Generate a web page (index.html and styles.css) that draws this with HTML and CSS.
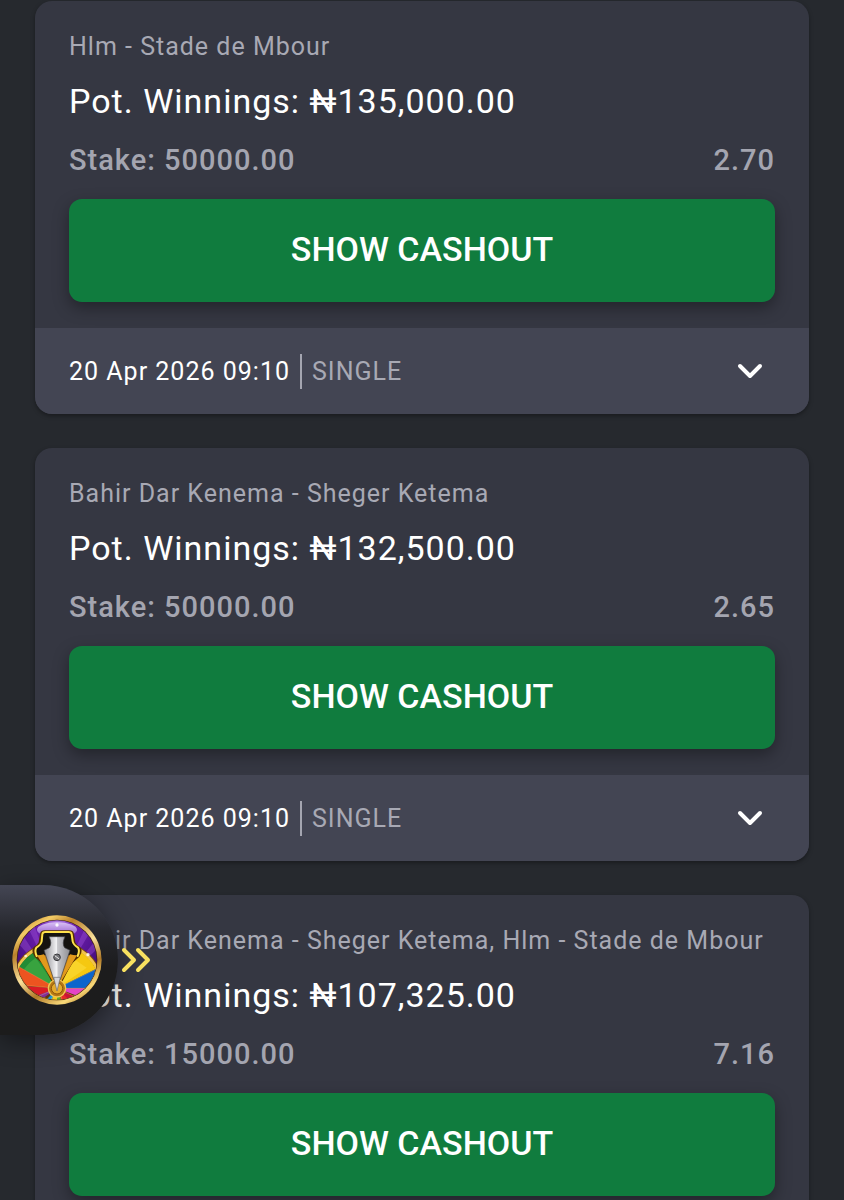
FILE: index.html
```html
<!DOCTYPE html>
<html lang="en">
<head>
<meta charset="utf-8">
<meta name="viewport" content="width=device-width, initial-scale=1">
<title>Open Bets</title>
<link rel="stylesheet" href="styles.css">
</head>

<body>

<main class="bets">
	<article class="bet">
		<div class="bet-main">
			<p class="teams">Hlm - Stade de Mbour</p>
			<p class="winnings">Pot. Winnings: ₦135,000.00</p>
			<p class="stake"><span>Stake: 50000.00</span><span>2.70</span></p>
			<button class="cashout" type="button">SHOW CASHOUT</button>
		</div>
		<div class="bet-footer">
			<span class="date">20 Apr 2026 09:10</span>
			<span class="type">SINGLE</span>
			<button class="toggle" type="button" aria-label="Show details">
				<svg width="26" height="16" viewBox="0 0 26 16"><path d="M3 3l10 10L23 3" fill="none" stroke="#fff" stroke-width="4" stroke-linecap="round" stroke-linejoin="round"/></svg>
			</button>
		</div>
	</article>

	<article class="bet">
		<div class="bet-main">
			<p class="teams">Bahir Dar Kenema - Sheger Ketema</p>
			<p class="winnings">Pot. Winnings: ₦132,500.00</p>
			<p class="stake"><span>Stake: 50000.00</span><span>2.65</span></p>
			<button class="cashout" type="button">SHOW CASHOUT</button>
		</div>
		<div class="bet-footer">
			<span class="date">20 Apr 2026 09:10</span>
			<span class="type">SINGLE</span>
			<button class="toggle" type="button" aria-label="Show details">
				<svg width="26" height="16" viewBox="0 0 26 16"><path d="M3 3l10 10L23 3" fill="none" stroke="#fff" stroke-width="4" stroke-linecap="round" stroke-linejoin="round"/></svg>
			</button>
		</div>
	</article>

	<article class="bet">
		<div class="bet-main">
			<p class="teams">Bahir Dar Kenema - Sheger Ketema, Hlm - Stade de Mbour</p>
			<p class="winnings">Pot. Winnings: ₦107,325.00</p>
			<p class="stake"><span>Stake: 15000.00</span><span>7.16</span></p>
			<button class="cashout" type="button">SHOW CASHOUT</button>
		</div>
	</article>
</main>

<button class="spinner" type="button" aria-label="Open spin wheel">
	<svg class="wheel" width="92" height="92" viewBox="29 25 276 276">
		<defs>
			<linearGradient id="gold" x1=".2" y1="0" x2=".8" y2="1">
				<stop offset="0" stop-color="#c98a2a"/>
				<stop offset=".12" stop-color="#f3cb66"/>
				<stop offset=".25" stop-color="#b9802a"/>
				<stop offset=".5" stop-color="#f9e09a"/>
				<stop offset=".7" stop-color="#b07a28"/>
				<stop offset=".88" stop-color="#f8d878"/>
				<stop offset="1" stop-color="#b27a24"/>
			</linearGradient>
			<linearGradient id="steel" x1="0" y1="0" x2="1" y2="0">
				<stop offset="0" stop-color="#8d8d92"/>
				<stop offset=".48" stop-color="#f2f2f4"/>
				<stop offset=".52" stop-color="#c8c8cc"/>
				<stop offset="1" stop-color="#8e8e93"/>
			</linearGradient>
			<radialGradient id="purple" cx=".5" cy=".1" r=".7">
				<stop offset="0" stop-color="#c9a2f5"/>
				<stop offset=".3" stop-color="#6d1fb0"/>
				<stop offset="1" stop-color="#3d0a74"/>
			</radialGradient>
			<linearGradient id="dome" x1="0" y1="0" x2="0" y2="1">
				<stop offset="0" stop-color="#d9c0f5"/>
				<stop offset="1" stop-color="#8a4cc8"/>
			</linearGradient>
			<clipPath id="face"><circle cx="167" cy="163" r="119"/></clipPath>
		</defs>
		<circle cx="167" cy="163" r="134" fill="url(#gold)"/>
		<circle cx="167" cy="163" r="121" fill="#3d220b"/>
		<g clip-path="url(#face)">
			<rect x="40" y="40" width="254" height="246" fill="url(#purple)"/>
			<path d="M167 248L40 100l18-22zM167 248L75 55l18-12zM167 248l86-185 15 13zM167 248L290 95l12 20z" fill="#a95de0" opacity=".35"/>
			<ellipse cx="167" cy="72" rx="60" ry="22" fill="url(#dome)"/>
			<circle cx="167" cy="248" r="141" fill="#7d4b10"/>
			<circle cx="167" cy="248" r="138" fill="#f0c34e"/>
			<circle cx="167" cy="248" r="129" fill="#5f360c"/>
			<path d="M167 248L102 138l65-18z" fill="#cb7a15"/>
			<path d="M167 248l66-110-66-18z" fill="#d68a1a"/>
			<path d="M167 248L54 183q18-28 46-44z" fill="#218c35"/>
			<path d="M167 248L68 191q14-21 35-35z" fill="#43ad45" opacity=".7"/>
			<path d="M167 248L37 236q3-28 18-51z" fill="#ed5420"/>
			<path d="M167 248L55 296q-20-28-16-57z" fill="#d91b26"/>
			<path d="M167 248l-77 55-25-18z" fill="#7f2d9b"/>
			<path d="M167 248l68-110q31 17 48 52z" fill="#f5c811"/>
			<path d="M167 248l54-86 35 24z" fill="#ffe348" opacity=".45"/>
			<path d="M167 248l116-57q14 25 13 55z" fill="#0d65cc"/>
			<path d="M167 248l129 0q-1 20-21 40z" fill="#e544c8"/>
			<path d="M167 248l98 45-42 16z" fill="#c91536"/>
			<path d="M167 248l-55 60h28z" fill="#1796d5"/>
			<path d="M167 248l-28 60h28z" fill="#f3cb16"/>
			<path d="M167 248v60h23z" fill="#63a72a"/>
			<path d="M167 248l23 60h40z" fill="#e52a29"/>
			<path d="M167 248L37 236M167 248L54 184M167 248L65 292M167 248l116-57M167 248h129M167 248l98 45M167 248l-33 60M167 248l28 60" stroke="#ffd877" stroke-width="1" fill="none"/>
		</g>
		<path d="M120 85q2-7 10-7h74q8 0 10 7l4 25q3 9 16 17 4 3 2 13l-5 11-23 20-41 79-41-79-23-20-5-11q-2-10 2-13 13-8 16-17z" fill="#c98116" stroke="#553000" stroke-width="8" stroke-linejoin="round"/>
		<path d="M103 149q-2-14 1-23 14-9 16-19l2-21q1-6 9-6h72q8 0 9 6l2 21q2 10 16 19 3 9 1 23z" fill="#15130f"/>
		<path d="M128 146l39 102-59-98zM206 146l-39 102 59-98z" fill="#e29a1c"/>
		<path d="M106 151q-7-16-1-25 14-9 16-19l2-21q1-7 10-7h68q9 0 10 7l3 21q2 10 16 19 6 9-1 25" fill="none" stroke="#ffe14b" stroke-width="6" stroke-linecap="round"/>
		<path d="M143 93h48q-10 21-1 33l16 8-39 117-39-117 16-8q9-13-1-33z" fill="url(#steel)" stroke="#3e3e42" stroke-width="2"/>
		<path d="M167 168v76" stroke="#f0f0f0" stroke-width="3"/>
		<circle cx="167" cy="155" r="10" fill="#77777b" stroke="#38383b" stroke-width="3"/>
		<path d="M160 150l14 10" stroke="#ececec" stroke-width="3"/>
		<circle cx="167" cy="248" r="26" fill="#b67914" stroke="#f2c652" stroke-width="4"/>
		<circle cx="167" cy="248" r="17" fill="#e4aa2c" stroke="#8c560c" stroke-width="3"/>
		<path d="M157 215h20l-10 41z" fill="#d5d5d8" stroke="#6a6a6d" stroke-width="2"/>
		<g fill="#fff">
			<circle cx="167" cy="58" r="5" opacity=".9"/>
			<circle cx="73" cy="151" r="4" opacity=".75"/>
			<circle cx="260" cy="147" r="5" opacity=".85"/>
		</g>
	</svg>
	<svg class="arrows" width="30" height="26" viewBox="0 0 30 26"><path d="M3 3l10 10L3 23M17 3l10 10-10 10" fill="none" stroke="#f8e160" stroke-width="4" stroke-linecap="round" stroke-linejoin="round"/></svg>
</button>

</body>
</html>
```

FILE: styles.css
```css
* {
	box-sizing: border-box;
}
body {
	margin: 0;
	height: 100vh;
	overflow: hidden;
	background: #26292e;
	color: #fff;
	font-family: Roboto, "Liberation Sans", sans-serif;
	letter-spacing: 1px;
}
p {
	margin: 0;
}
button {
	border: 0;
	padding: 0;
	font: inherit;
	color: inherit;
	letter-spacing: inherit;
}
.bets {
	display: flex;
	flex-direction: column;
	gap: 34px;
	padding: 1px 35px 0;
}
.bet {
	border-radius: 17px;
	background: #353742;
	box-shadow: 0 2px 4px rgba(0, 0, 0, 0.35);
	overflow: hidden;
}
.bet-main {
	padding: 28px 34px 26px;
}
.teams {
	font-size: 25px;
	line-height: 36px;
	color: #a8a9b4;
}
.winnings {
	margin-top: 14px;
	font-size: 34px;
	line-height: 44px;
}
.stake {
	display: flex;
	justify-content: space-between;
	margin: 18px 0 20px;
	font-size: 29px;
	font-weight: 500;
	line-height: 38px;
	color: #a4a5b0;
}
.cashout {
	display: block;
	width: 100%;
	height: 103px;
	padding-bottom: 4px;
	border-radius: 13px;
	background: #107c3e;
	box-shadow: 0 6px 16px rgba(0, 0, 0, 0.35);
	font-size: 34px;
	font-weight: 500;
	letter-spacing: normal;
}
.bet-footer {
	display: flex;
	align-items: center;
	height: 86px;
	padding: 0 34px;
	background: #434553;
	font-size: 25px;
	line-height: 35px;
}
.date {
	padding-right: 10px;
	border-right: 2px solid #a4a5b0;
}
.type {
	padding-left: 10px;
	color: #a8a9b4;
}
.toggle {
	display: flex;
	margin-left: auto;
	padding: 12px;
	background: none;
}
.spinner {
	position: fixed;
	left: 0;
	top: 885px;
	display: flex;
	align-items: center;
	width: 118px;
	height: 150px;
	padding-left: 11px;
	border-radius: 0 75px 75px 0;
	background: linear-gradient(#444654, #26272d 30%, #1c1c1d 55%, #1c1c1c);
	box-shadow: 0 6px 24px rgba(0, 0, 0, 0.45);
}
.wheel {
	flex: none;
}
.arrows {
	flex: none;
	margin-left: 18px;
}
```
